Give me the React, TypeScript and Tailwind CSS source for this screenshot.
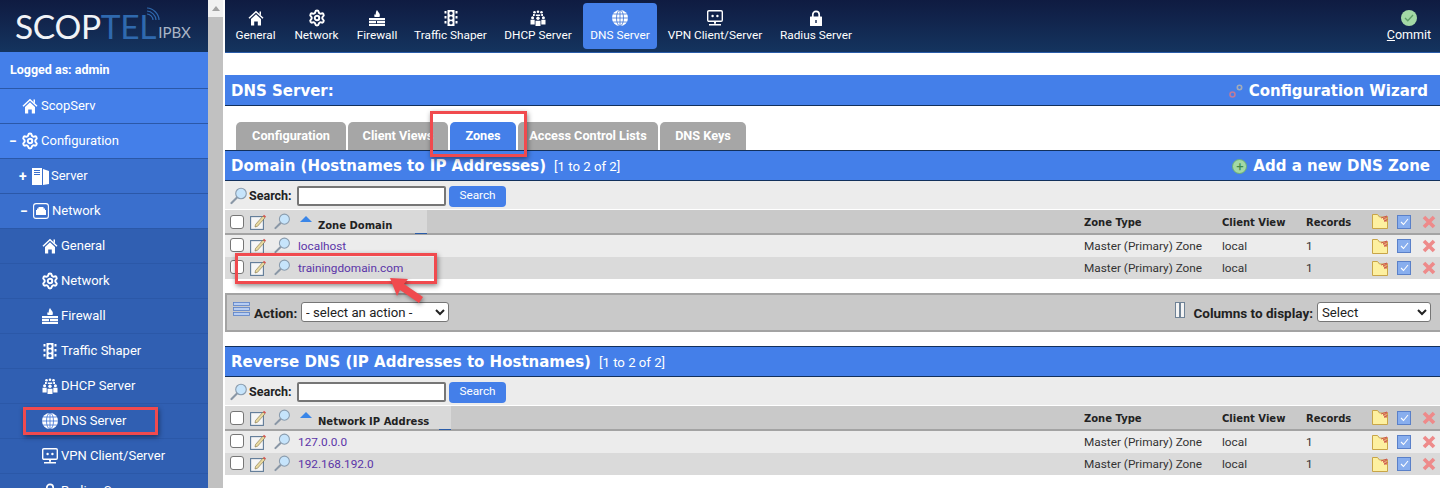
import { Settings } from "lucide-react";
import { ReactNode } from "react";

const body = "font-['Roboto',sans-serif]";
const heading = "font-['DejaVu_Sans',sans-serif] font-bold";

/* ---------- icons ---------- */

function Home({ size = 16 }: { size?: number }) {
    return (
        <svg width={size} height={size} viewBox="0 0 16 16" fill="white">
            <path d="M1 8.300L8 1.700l7 6.600" fill="none" stroke="white" strokeWidth="1.500" />
            <path d="M11.500 1.500h1.500v4l-1.500-1.400z" />
            <path d="M3 9l5-4.700L13 9v6.500H9.800v-4H6.200v4H3z" />
        </svg>
    );
}

function Firewall({ size = 16 }: { size?: number }) {
    return (
        <svg width={size} height={size} viewBox="0 0 16 16" fill="white">
            <path d="M8 0c.6 1.600 2.400 2.600 2.800 4.600.2 1 0 1.800-.3 2.400H5.600c-.5-1-.4-2.200.3-3.100.2.5.5.8.9.9C6.600 3 7 1.400 8 0z" />
            <path d="M0 8h16v2.200H0zM0 11h7v2.200H0zM8 11h8v2.200H8zM0 14h16v2H0z" />
        </svg>
    );
}

function Traffic({ size = 16 }: { size?: number }) {
    return (
        <svg width={size} height={size} viewBox="0 0 16 16" fill="white">
            <path fillRule="evenodd" d="M4.500 0h7v16h-7zM8 1.500a1.700 1.700 0 100 3.400 1.700 1.700 0 000-3.400zM8 6.300a1.700 1.700 0 100 3.400 1.700 1.700 0 000-3.400zM8 11.100a1.700 1.700 0 100 3.400 1.700 1.700 0 000-3.400z" />
            <path d="M1.500 1h2v2.500h-2zM12.500 1h2v2.500h-2zM1.500 6h2v2.500h-2zM12.500 6h2v2.500h-2zM1.500 11h2v2.500h-2zM12.500 11h2v2.500h-2z" />
        </svg>
    );
}

function People({ size = 16 }: { size?: number }) {
    return (
        <svg width={size} height={size} viewBox="0 0 16 16" fill="white">
            <circle cx="4.500" cy="2.200" r="1.300" />
            <circle cx="8" cy="1.700" r="1.300" />
            <circle cx="11.500" cy="2.200" r="1.300" />
            <path d="M5.800 4.500h4.400V6H5.800zM3 4h1.800v2H3zM11.200 4H13v2h-1.800z" />
            <circle cx="2.600" cy="7.800" r="1.500" />
            <circle cx="13.400" cy="7.800" r="1.500" />
            <circle cx="8" cy="8.300" r="1.700" />
            <path d="M0.500 9.800h4.200v4.700H.5zM11.300 9.800h4.200v4.700h-4.200zM5.500 10.800h5V16h-5z" />
        </svg>
    );
}

function Globe({ size = 16 }: { size?: number }) {
    return (
        <svg width={size} height={size} viewBox="0 0 16 16" fill="none" stroke="#3f74d6" strokeWidth="0.800">
            <circle cx="8" cy="8" r="8" fill="white" stroke="none" />
            <ellipse cx="8" cy="8" rx="3.500" ry="8" />
            <path d="M8 0v16M0 8h16M1.200 4h13.600M1.200 12h13.600" />
        </svg>
    );
}

function Vpn({ size = 16 }: { size?: number }) {
    return (
        <svg width={size} height={size} viewBox="0 0 16 16" fill="none">
            <rect x="0.700" y="0.700" width="14.600" height="10.600" rx="1.200" stroke="white" strokeWidth="1.400" />
            <circle cx="5.600" cy="6" r="1.200" fill="white" />
            <circle cx="10.400" cy="6" r="1.200" fill="white" />
            <path d="M7 12h2v1.800H7zM2 14h12v1.500H2z" fill="white" />
        </svg>
    );
}

function Padlock({ size = 16 }: { size?: number }) {
    return (
        <svg width={size} height={size} viewBox="0 0 16 16" fill="none">
            <path d="M4.800 7V4.500a3.200 3.200 0 016.400 0V7" stroke="white" strokeWidth="1.700" />
            <path fillRule="evenodd" d="M2.500 6.500h11a.5.5 0 01.5.5v8.500a.5.5 0 01-.5.5h-11a.5.5 0 01-.5-.5V7a.5.5 0 01.5-.5zM7.300 10v3h1.400v-3z" fill="white" />
        </svg>
    );
}

function ServerIcon() {
    return (
        <svg width="17" height="17" viewBox="0 0 17 17" fill="white">
            <path fillRule="evenodd" d="M0 0h10v17H0zM2 2v1h6V2zM2 4v1h6V4zM2 6v1h6V6z" />
            <path d="M11 1l6 2v13l-6 1z" />
        </svg>
    );
}

function NetworkIcon() {
    return (
        <svg width="16" height="16" viewBox="0 0 16 16" fill="none">
            <rect x="0.600" y="0.600" width="14.800" height="14.800" rx="2.500" stroke="white" strokeWidth="1.100" />
            <path d="M5.500 4h5v1.500H12V7h1v5H3V7h1V5.500h1.500z" fill="white" />
        </svg>
    );
}

function Magnifier({ size = 18 }: { size?: number }) {
    return (
        <svg width={size} height={size} viewBox="0 0 18 18" fill="none">
            <path d="M7 10.500L1.500 16" stroke="#8a97a6" strokeWidth="2.200" strokeLinecap="round" />
            <circle cx="11" cy="6.500" r="5.300" fill="#c6e4fb" stroke="#8a9cae" strokeWidth="1.100" />
        </svg>
    );
}

function EditIcon() {
    return (
        <svg width="17" height="17" viewBox="0 0 17 17" fill="none">
            <rect x="0.600" y="3.600" width="12.800" height="12.800" fill="#f6f6f6" stroke="#5f7a97" strokeWidth="1.100" />
            <path d="M5.500 11.500L13 3l2 1.800-7.500 8.500-2.500.7z" fill="#e8d9a0" stroke="#6b5a2c" strokeWidth="0.500" />
            <path d="M13 3l1-1.300 2 1.800-1 1.300z" fill="#d9534f" />
        </svg>
    );
}

function FolderIcon() {
    return (
        <svg width="16" height="15" viewBox="0 0 16 15" fill="none">
            <path d="M0.500 0.500h5l2 2.500h8v11.500H.5z" fill="#fdf0a0" stroke="#c8a548" />
            <path d="M9 4l6-2v1l-4 2 4 0v1l-3 1 3 0" stroke="#cf5a4c" strokeWidth="1" />
        </svg>
    );
}

function CheckIcon() {
    return (
        <div className="w-[14px] h-[14px] bg-[#88aeee] border border-[#5a80c8] flex items-center justify-center">
            <svg width="9" height="8" viewBox="0 0 9 8" fill="none">
                <path d="M1 4l2.500 2.500L8 1" stroke="white" strokeWidth="1.100" />
            </svg>
        </div>
    );
}

function XIcon() {
    return (
        <svg width="14" height="14" viewBox="0 0 14 14" fill="none">
            <path d="M2 2l10 10M12 2L2 12" stroke="#ee8a8a" strokeWidth="3.600" />
        </svg>
    );
}

function Check() {
    return <div className="w-[14px] h-[14px] bg-white border border-[#767676] rounded-[3px]" />;
}

/* ---------- sidebar ---------- */

function SideItem(props: { label: string; icon: ReactNode; tone: string; pad: string; sign?: string }) {
    return (
        <div className={`h-[35px] shrink-0 flex items-center border-b border-[#2b58a8] text-white text-[13px] ${props.tone} ${props.pad}`}>
            {props.sign && <span className="w-[13px] text-[14px] font-bold leading-none">{props.sign}</span>}
            <span className="w-[19px] flex justify-start">{props.icon}</span>
            <span className="whitespace-nowrap">{props.label}</span>
        </div>
    );
}

function Sidebar() {
    const sub = "bg-[#305fb2]";
    const mid = "bg-[#3a6fcd]";
    const top = "bg-[#447fe9]";
    return (
        <div className={`w-[208px] h-[488px] shrink-0 flex flex-col overflow-hidden ${body}`}>
            <div className="h-[52px] shrink-0 bg-gradient-to-b from-[#0f1b41] to-[#14345f] flex items-end pl-[15px] pb-[13px] relative font-['Lato',sans-serif]">
                <span className="font-normal text-[33.500px] leading-[26px] text-[#f0f3f7] tracking-[-0.300px]">SCOP</span>
                <span className="font-normal text-[33.500px] leading-[26px] text-[#2f69ae] tracking-[-0.300px]">TEL</span>
                <span className="font-normal text-[15px] leading-[13px] text-[#a9b5c6] ml-[2px]">IPBX</span>
                <svg className="absolute left-[146px] top-[7px]" width="14" height="14" viewBox="0 0 14 14" fill="none" stroke="#2f69ae" strokeWidth="1.200">
                    <path d="M1 1c6 0 12 6 12 12M1 4c4.500 0 9 4.500 9 9M1 7c3 0 6 3 6 6" />
                </svg>
            </div>
            <div className={`h-[37px] shrink-0 ${top} border-b border-[#2b58a8] flex items-center pl-[10px] text-white text-[12.500px] font-bold`}>Logged as: admin</div>
            <SideItem tone={top} pad="pl-[22px]" label="ScopServ" icon={<Home />} />
            <SideItem tone={top} pad="pl-[9px]" sign="−" label="Configuration" icon={<Settings size={18} strokeWidth={2.600} className="-ml-[1px]" />} />
            <SideItem tone={mid} pad="pl-[19px]" sign="+" label="Server" icon={<ServerIcon />} />
            <SideItem tone={mid} pad="pl-[20px]" sign="−" label="Network" icon={<NetworkIcon />} />
            <SideItem tone={sub} pad="pl-[42px]" label="General" icon={<Home />} />
            <SideItem tone={sub} pad="pl-[42px]" label="Network" icon={<Settings size={18} strokeWidth={2.600} className="-ml-[1px]" />} />
            <SideItem tone={sub} pad="pl-[42px]" label="Firewall" icon={<Firewall />} />
            <SideItem tone={sub} pad="pl-[42px]" label="Traffic Shaper" icon={<Traffic />} />
            <SideItem tone={sub} pad="pl-[42px]" label="DHCP Server" icon={<People />} />
            <SideItem tone={sub} pad="pl-[42px]" label="DNS Server" icon={<Globe />} />
            <SideItem tone={sub} pad="pl-[42px]" label="VPN Client/Server" icon={<Vpn />} />
            <SideItem tone={sub} pad="pl-[42px]" label="Radius Server" icon={<Padlock />} />
        </div>
    );
}

function Scrollbar() {
    return (
        <div className="w-[15px] h-[488px] shrink-0 bg-[#f1f1f1] flex flex-col">
            <div className="h-[17px] shrink-0 flex items-center justify-center">
                <div className="w-0 h-0 border-x-[4px] border-x-transparent border-b-[5px] border-b-[#a3a3a3]" />
            </div>
            <div className="flex-1 bg-[#c1c1c1]" />
        </div>
    );
}

/* ---------- top navigation ---------- */

function NavItem(props: { label: string; icon: ReactNode; width: string; active?: boolean }) {
    return (
        <div className={`h-[46px] flex flex-col items-center pt-[5px] rounded-[4px] ${props.width} ${props.active ? "bg-[#447fe9]" : ""}`}>
            <div className="h-[19px] flex items-center">{props.icon}</div>
            <span className="text-[11.800px] leading-[16px] text-white whitespace-nowrap">{props.label}</span>
        </div>
    );
}

function TopBar() {
    return (
        <div className={`h-[53px] shrink-0 bg-gradient-to-b from-[#0f1b41] to-[#14345f] border-b border-[#2a5ca8] flex items-start pt-[3px] pl-[3px] gap-[4px] ${body}`}>
            <NavItem width="w-[55px]" label="General" icon={<Home />} />
            <NavItem width="w-[59px]" label="Network" icon={<Settings size={18} strokeWidth={2.600} color="white" />} />
            <NavItem width="w-[54px]" label="Firewall" icon={<Firewall />} />
            <NavItem width="w-[85px]" label="Traffic Shaper" icon={<Traffic />} />
            <NavItem width="w-[82px]" label="DHCP Server" icon={<People />} />
            <NavItem width="w-[74px]" label="DNS Server" icon={<Globe />} active />
            <NavItem width="w-[108px]" label="VPN Client/Server" icon={<Vpn />} />
            <NavItem width="w-[86px]" label="Radius Server" icon={<Padlock />} />
            <div className="ml-auto w-[56px] mr-[3px] flex flex-col items-center pt-[5px]">
                <div className="h-[19px] flex items-center">
                    <div className="w-[16px] h-[16px] rounded-full bg-[#a3d9a5] flex items-center justify-center">
                        <svg width="10" height="8" viewBox="0 0 10 8" fill="none">
                            <path d="M1 4l2.800 2.800L9 1" stroke="#5e9e66" strokeWidth="1.300" />
                        </svg>
                    </div>
                </div>
                <span className="text-[12.500px] leading-[16px] text-white"><span className="underline">C</span>ommit</span>
            </div>
        </div>
    );
}

/* ---------- tables ---------- */

const cols = "grid grid-cols-[25px_24px_20px_790px_138px_84px_66px_25px_25px_18px] items-center";

function RowIcons() {
    return (
        <>
            <FolderIcon />
            <CheckIcon />
            <XIcon />
        </>
    );
}

function Row(props: { name: string; bg: string }) {
    return (
        <div className={`${cols} h-[22px] text-[11.800px] text-[#333] ${props.bg}`}>
            <div className="pl-[5px] mb-[2px]"><Check /></div>
            <div className="mb-[2px]"><EditIcon /></div>
            <div className="mb-[2px]"><Magnifier size={17} /></div>
            <span className="pl-[4px] pt-[2px] text-[#5b35a8]">{props.name}</span>
            <span className="pt-[2px]">Master (Primary) Zone</span>
            <span className="pt-[2px]">local</span>
            <span className="pt-[2px]">1</span>
            <RowIcons />
        </div>
    );
}

function Section(props: { title: string; count: string; column: string; columnWidth: string; rows: string[]; add?: boolean }) {
    return (
        <div className={body}>
            <div className="h-[31px] bg-[#447fe9] border-y border-[#12305c] flex items-center pl-[6px] pr-[10px] pt-[1px] text-white">
                <span className={`${heading} text-[15px]`}>{props.title}</span>
                <span className="text-[13.200px] ml-[8px] mt-[2px]">{props.count}</span>
                {props.add && (
                    <div className="ml-auto flex items-center gap-[6px]">
                        <div className="w-[15px] h-[15px] rounded-full bg-[#a3d9a5] border border-[#6cb075] flex items-center justify-center text-[#3f8a4c] text-[13px] leading-none">+</div>
                        <span className={`${heading} text-[15px]`}>Add a new DNS Zone</span>
                    </div>
                )}
            </div>
            <div className="h-[28px] mb-[1px] bg-[#ececec] flex items-center pl-[5px] pt-[2px]">
                <Magnifier />
                <span className="font-bold text-[12.500px] text-[#222] ml-[1px] mt-[1px] w-[48px]">Search:</span>
                <input className="w-[149px] h-[20px] bg-white border-2 border-[#767676] rounded-[2px]" readOnly />
                <div className="w-[57px] h-[21px] ml-[3px] bg-[#447fe9] rounded-[4px] text-white text-[11.800px] flex items-center justify-center">Search</div>
            </div>
            <div className={`${cols} h-[25px] bg-[#c9c9c9] border-b-2 border-[#a3a3a3] text-[10px] text-[#222] ${heading}`}>
                <div className="pl-[5px] bg-[#d9d9d9] h-full flex items-center"><Check /></div>
                <div className="bg-[#d9d9d9] h-full flex items-center"><EditIcon /></div>
                <div className="bg-[#d9d9d9] h-full flex items-center"><Magnifier size={17} /></div>
                <div className="h-full">
                    <div className={`${props.columnWidth} h-full bg-[#d9d9d9] flex items-center pl-[6px] relative`}>
                        <div className="w-0 h-0 border-x-[6px] border-x-transparent border-b-[6px] border-b-[#3a86e8] mb-[6px]" />
                        <span className="ml-[6px] mt-[8px] whitespace-nowrap">{props.column}</span>
                        <div className="absolute right-0 -bottom-[1px] w-[12px] h-[1px] bg-[#2a5ca8]" />
                    </div>
                </div>
                <span className="pt-[2px]">Zone Type</span>
                <span className="pt-[2px]">Client View</span>
                <span className="pt-[2px]">Records</span>
                <RowIcons />
            </div>
            {props.rows.map((name, i) => (
                <Row key={name} name={name} bg={i % 2 === 0 ? "bg-[#ececec]" : "bg-[#dadada]"} />
            ))}
        </div>
    );
}

const tabs = [
    { label: "Configuration", width: "w-[110px]" },
    { label: "Client Views", width: "w-[100px]" },
    { label: "Zones", width: "w-[66px]", active: true },
    { label: "Access Control Lists", width: "w-[140px]" },
    { label: "DNS Keys", width: "w-[86px]" },
];

function Annotations() {
    const box = "absolute border-[3px] border-[#f04a4e] shadow-[1px_2px_5px_rgba(0,0,0,0.45)]";
    return (
        <>
            <div className={`${box} left-[430px] top-[111px] w-[97px] h-[46px]`} />
            <div className={`${box} left-[235px] top-[253px] w-[202px] h-[31px]`} />
            <div className={`${box} left-[23px] top-[407px] w-[135px] h-[28px]`} />
            <svg className="absolute left-[385px] top-[272px] drop-shadow-[1px_2px_2px_rgba(0,0,0,0.4)]" width="44" height="36" viewBox="0 0 44 36" fill="#f04a4e">
                <path d="M5 6L23 7l-4 5 19 13-4 6-19-13-3 6z" />
            </svg>
        </>
    );
}

export default function App() {
    return (
        <div className="relative w-[1440px] h-[488px] overflow-hidden bg-white flex">
            <Sidebar />
            <Scrollbar />
            <div className="w-[2px] shrink-0" />
            <div className="flex-1 flex flex-col min-w-0">
                <TopBar />
                <div className="h-[22px] shrink-0" />
                <div className={`${heading} h-[31px] shrink-0 bg-[#447fe9] border-b border-[#12305c] flex items-center justify-between pl-[6px] pr-[12px] pt-[2px] text-white text-[15px]`}>
                    <span>DNS Server:</span>
                    <div className="flex items-center gap-[6px]">
                        <svg width="14" height="14" viewBox="0 0 14 14" fill="none">
                            <circle cx="3.500" cy="10.500" r="2.500" stroke="#c07a9a" strokeWidth="1.600" />
                            <circle cx="10.500" cy="3.500" r="2.200" stroke="#a4acb8" strokeWidth="1.600" />
                        </svg>
                        <span>Configuration Wizard</span>
                    </div>
                </div>
                <div className={`h-[44px] shrink-0 flex items-end pl-[11px] gap-[2px] ${body}`}>
                    {tabs.map((tab) => (
                        <div
                            key={tab.label}
                            className={`${tab.width} h-[28px] rounded-t-[5px] flex items-center justify-center text-white text-[12.700px] font-bold whitespace-nowrap ${tab.active ? "bg-[#447fe9]" : "bg-[#a6a6a6]"}`}
                        >
                            {tab.label}
                        </div>
                    ))}
                </div>
                <Section title="Domain (Hostnames to IP Addresses)" count="[1 to 2 of 2]" column="Zone Domain" columnWidth="w-[133px]" rows={["localhost", "trainingdomain.com"]} add />
                <div className={`h-[39px] mt-[14px] shrink-0 bg-[#c9c9c9] border-y-2 border-l-2 border-[#a3a3a3] flex items-center pl-[6px] pr-[9px] ${body}`}>
                    <svg width="18" height="15" viewBox="0 0 18 15" fill="#b6cdf3" stroke="#5a80c8" strokeWidth="0.800" className="mb-[6px]">
                        <rect x="0.500" y="0.500" width="16" height="3" />
                        <rect x="0.500" y="5.500" width="16" height="3" />
                        <rect x="0.500" y="10.500" width="16" height="3" />
                    </svg>
                    <span className="font-bold text-[13.500px] text-[#222] ml-[3px] mt-[1px] w-[47px]">Action:</span>
                    <select className="w-[148px] h-[20px] bg-white border border-[#767676] rounded-[3px] text-[13.200px] text-[#222] mb-[1px]">
                        <option>- select an action -</option>
                    </select>
                    <div className="ml-auto flex items-center">
                        <svg width="11" height="16" viewBox="0 0 11 16" fill="#f4f4f4" stroke="#6f8296" className="mb-[6px] mr-[7px]">
                            <rect x="0.500" y="0.500" width="4" height="15" />
                            <rect x="5.500" y="0.500" width="4" height="15" />
                        </svg>
                        <span className="font-bold text-[13.500px] text-[#222] mr-[4px] mt-[1px]">Columns to display:</span>
                        <select className="w-[114px] h-[20px] bg-white border border-[#767676] rounded-[3px] text-[13.200px] text-[#222] mb-[1px]">
                            <option>Select</option>
                        </select>
                    </div>
                </div>
                <div className="h-[14px] shrink-0" />
                <Section title="Reverse DNS (IP Addresses to Hostnames)" count="[1 to 2 of 2]" column="Network IP Address" columnWidth="w-[157px]" rows={["127.0.0.0", "192.168.192.0"]} />
            </div>
            <Annotations />
        </div>
    );
}
